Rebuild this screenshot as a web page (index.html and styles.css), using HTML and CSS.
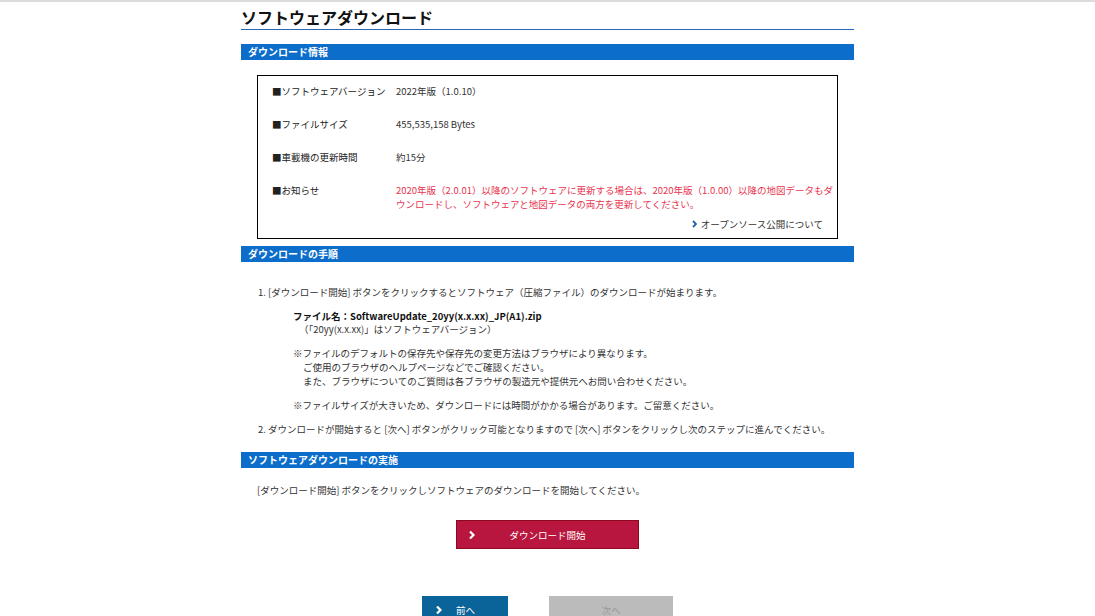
FILE: index.html
```html
<!DOCTYPE html>
<html lang="ja">
<head>
    <meta charset="UTF-8">
    <title>ソフトウェアダウンロード</title>
    <link rel="stylesheet" href="styles.css">
</head>
<body>
    <div class="page">
        <h1>ソフトウェアダウンロード</h1>

        <h2 class="section-title">ダウンロード情報</h2>
        <div class="info-box">
            <div class="info-row">
                <div class="info-label">■ソフトウェアバージョン</div>
                <div class="info-value">2022年版（1.0.10）</div>
            </div>
            <div class="info-row">
                <div class="info-label">■ファイルサイズ</div>
                <div class="info-value">455,535,158 Bytes</div>
            </div>
            <div class="info-row">
                <div class="info-label">■車載機の更新時間</div>
                <div class="info-value">約15分</div>
            </div>
            <div class="info-row notice">
                <div class="info-label">■お知らせ</div>
                <div class="info-value red">2020年版（2.0.01）以降のソフトウェアに更新する場合は、2020年版（1.0.00）以降の地図データもダウンロードし、ソフトウェアと地図データの両方を更新してください。</div>
            </div>
            <div class="oss-link">
                <svg class="chev" width="5" height="8" viewBox="0 0 5 8"><polyline points="1,1 4,4 1,7" fill="none" stroke="#1f5fa8" stroke-width="1.8"/></svg>
                オープンソース公開について
            </div>
        </div>

        <h2 class="section-title after-box">ダウンロードの手順</h2>
        <ol class="steps">
            <li>
                <p>1. [ダウンロード開始] ボタンをクリックするとソフトウェア（圧縮ファイル）のダウンロードが始まります。</p>
                <div class="file-name">
                    <b>ファイル名：SoftwareUpdate_20yy(x.x.xx)_JP(A1).zip</b>
                    <span>（「20yy(x.x.xx)」はソフトウェアバージョン）</span>
                </div>
                <div class="note">
                    <p>※ファイルのデフォルトの保存先や保存先の変更方法はブラウザにより異なります。</p>
                    <p class="indent">ご使用のブラウザのヘルプページなどでご確認ください。</p>
                    <p class="indent">また、ブラウザについてのご質問は各ブラウザの製造元や提供元へお問い合わせください。</p>
                </div>
                <div class="note">
                    <p>※ファイルサイズが大きいため、ダウンロードには時間がかかる場合があります。ご留意ください。</p>
                </div>
            </li>
            <li>
                <p>2. ダウンロードが開始すると [次へ] ボタンがクリック可能となりますので [次へ] ボタンをクリックし次のステップに進んでください。</p>
            </li>
        </ol>

        <h2 class="section-title after-steps">ソフトウェアダウンロードの実施</h2>
        <p class="lead">[ダウンロード開始] ボタンをクリックしソフトウェアのダウンロードを開始してください。</p>

        <div class="download-area">
            <button class="btn-download">
                <svg class="btn-chev" width="6" height="9" viewBox="0 0 6 9"><polyline points="1,1 4.5,4.5 1,8" fill="none" stroke="#fff" stroke-width="2.2"/></svg>
                ダウンロード開始
            </button>
        </div>

        <div class="nav-buttons">
            <button class="btn-prev">
                <svg class="btn-chev" width="6" height="9" viewBox="0 0 6 9"><polyline points="1,1 4.5,4.5 1,8" fill="none" stroke="#fff" stroke-width="2.2"/></svg>
                前へ
            </button>
            <button class="btn-next" disabled>次へ</button>
        </div>
    </div>
</body>
</html>
```

FILE: styles.css
```css
body {
    margin: 0;
    font-family: "Noto Sans CJK JP", "Noto Sans", sans-serif;
    font-size: 9.5px;
    color: #333;
    background-color: #fff;
    border-top: 2px solid #dcdcdc;
}
p {
    margin: 0;
}
.page {
    width: 613px;
    margin: 0 auto;
}
h1 {
    margin: 0;
    padding-top: 3px;
    font-size: 16px;
    line-height: 24px;
    font-weight: bold;
    color: #111;
    border-bottom: 1px solid #2a66b8;
}
.section-title {
    margin: 14px 0 0;
    padding-left: 7px;
    height: 16px;
    line-height: 16px;
    font-size: 10px;
    font-weight: bold;
    color: #fff;
    background-color: #0c6dcb;
}
.section-title.after-box {
    margin-top: 7px;
}
.section-title.after-steps {
    margin-top: 16px;
}
.info-box {
    margin: 15px 16px 0;
    padding: 8px 0 7px 14px;
    border: 1px solid #000;
}
.info-row {
    display: flex;
    line-height: 14px;
    margin-bottom: 19px;
}
.info-row.notice {
    margin-bottom: 6px;
}
.info-label {
    width: 124px;
    flex-shrink: 0;
    color: #222;
}
.info-value {
    flex: 1;
}
.red {
    color: #e8344f;
}
.oss-link {
    display: flex;
    justify-content: flex-end;
    align-items: center;
    gap: 4px;
    padding-right: 14px;
    line-height: 14px;
}
.steps {
    list-style: none;
    margin: 23px 0 0;
    padding: 0 0 0 17px;
    line-height: 14px;
}
.file-name {
    margin: 11px 0 0 35px;
    display: flex;
    flex-direction: column;
    line-height: 13px;
}
.file-name b {
    color: #111;
}
.file-name span {
    padding-left: 6px;
}
.note {
    margin: 10px 0 0 35px;
}
.file-name + .note {
    margin-top: 10px;
}
.note .indent {
    padding-left: 10px;
}
.steps li + li {
    margin-top: 10px;
}
.lead {
    margin: 15px 0 0 16px;
    line-height: 14px;
}
.download-area {
    display: flex;
    justify-content: center;
    margin-top: 23px;
}
.btn-download {
    position: relative;
    width: 183px;
    height: 29px;
    background-color: #b8163e;
    border: 1px solid #8c0a20;
    color: #fff;
    font-family: inherit;
    font-size: 9.5px;
    padding: 0;
}
.btn-chev {
    position: absolute;
    left: 12px;
    top: 50%;
    transform: translateY(-50%);
}
.nav-buttons {
    display: flex;
    justify-content: center;
    gap: 41px;
    margin-top: 47px;
}
.nav-buttons button {
    height: 28px;
    border: none;
    font-family: inherit;
    font-size: 9.5px;
    padding: 0;
}
.btn-prev {
    position: relative;
    width: 86px;
    background-color: #0a6399;
    color: #fff;
    text-align: left;
    padding-left: 34px !important;
}
.btn-prev .btn-chev {
    left: 14px;
}
.btn-next {
    width: 124px;
    background-color: #bbb;
    color: #999;
}
```
